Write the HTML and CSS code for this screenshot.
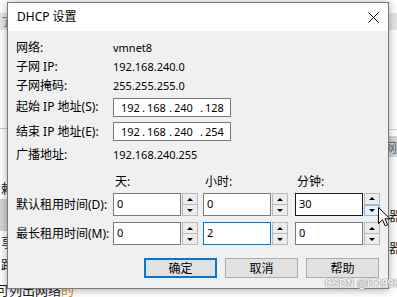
FILE: index.html
```html
<!DOCTYPE html>
<html lang="zh">
<head>
<meta charset="utf-8">
<title>DHCP 设置</title>
<link rel="stylesheet" href="styles.css">
</head>
<body>
<div class="desktop">
  <div class="backdrop">
    <div class="bd-col bd-left">
      <div class="bd-top"></div>
      <div class="bd-toolbar"><span class="bd-frag">了</span></div>
      <div class="bd-space1"></div>
      <div class="bd-line"></div>
      <div class="bd-space2"></div>
      <div class="bd-row">赖</div>
      <div class="bd-gray"></div>
      <div class="bd-row">享</div>
      <div class="bd-row bd-row-b">路</div>
      <div class="bd-space3"></div>
      <div class="bd-bottom">可列出网络<span class="bd-mark">的</span></div>
    </div>
    <div class="bd-col bd-right">
      <div class="bd-top"></div>
      <div class="bd-toolbar"></div>
      <div class="bd-rspace1"></div>
      <div class="bd-line"></div>
      <div class="bd-rspace2"></div>
      <div class="bd-rgray">网</div>
      <div class="bd-rspace3"></div>
      <div class="bd-rrow">器</div>
      <div class="bd-rrow bd-rrow-b">器</div>
    </div>
  </div>

  <div class="dialog">
    <div class="titlebar">
      <span class="title">DHCP 设置</span>
      <svg class="close" width="11" height="11" viewBox="0 0 11 11">
        <path d="M0.5 0.5 L10.5 10.5 M10.5 0.5 L0.5 10.5" stroke="#000" stroke-width="1" fill="none"/>
      </svg>
    </div>
    <div class="content">
      <div class="info">
        <div class="lbl">网络:</div><div class="val">vmnet8</div>
        <div class="lbl">子网 IP:</div><div class="val">192.168.240.0</div>
        <div class="lbl">子网掩码:</div><div class="val">255.255.255.0</div>
        <div class="lbl">起始 IP 地址(S):</div>
        <div class="ipbox"><span class="oct o1">192</span><span class="dot">.</span><span class="oct o2">168</span><span class="dot">.</span><span class="oct o3">240</span><span class="dot">.</span><span class="oct">128</span></div>
        <div class="lbl">结束 IP 地址(E):</div>
        <div class="ipbox"><span class="oct o1">192</span><span class="dot">.</span><span class="oct o2">168</span><span class="dot">.</span><span class="oct o3">240</span><span class="dot">.</span><span class="oct">254</span></div>
        <div class="lbl">广播地址:</div><div class="val">192.168.240.255</div>
      </div>

      <div class="lease">
        <div></div>
        <div class="hdr">天:</div>
        <div class="hdr">小时:</div>
        <div class="hdr">分钟:</div>

        <div class="lbl lrow">默认租用时间(D):</div>
        <div class="spin"><div class="sp-in">0</div><div class="sp-btns"><div class="sp-btn"><i class="up"></i></div><div class="sp-btn"><i class="down"></i></div></div></div>
        <div class="spin"><div class="sp-in">0</div><div class="sp-btns"><div class="sp-btn"><i class="up"></i></div><div class="sp-btn"><i class="down"></i></div></div></div>
        <div class="spin"><div class="sp-in hover">30</div><div class="sp-btns"><div class="sp-btn"><i class="up"></i></div><div class="sp-btn hot"><i class="down"></i></div></div></div>

        <div class="lbl lrow">最长租用时间(M):</div>
        <div class="spin"><div class="sp-in">0</div><div class="sp-btns"><div class="sp-btn"><i class="up"></i></div><div class="sp-btn"><i class="down"></i></div></div></div>
        <div class="spin"><div class="sp-in focus">2</div><div class="sp-btns"><div class="sp-btn"><i class="up"></i></div><div class="sp-btn"><i class="down"></i></div></div></div>
        <div class="spin"><div class="sp-in">0</div><div class="sp-btns"><div class="sp-btn"><i class="up"></i></div><div class="sp-btn"><i class="down"></i></div></div></div>
      </div>

      <div class="buttons">
        <button class="btn default">确定</button>
        <button class="btn">取消</button>
        <button class="btn">帮助</button>
      </div>
    </div>
  </div>

  <div class="watermark">CSDN @IT1995</div>

  <svg class="cursor" width="13" height="20" viewBox="0 0 13 20">
    <path d="M0.5 0.5 L0.5 16.5 L4.5 12.8 L7.2 18.8 L9.6 17.8 L7 11.8 L12 11.8 Z" fill="#fff" stroke="#000" stroke-width="1" stroke-linejoin="miter"/>
  </svg>
</div>
</body>
</html>
```
FILE: styles.css
```css
* { box-sizing: border-box; }
html, body { margin: 0; padding: 0; }
body {
  width: 397px;
  height: 297px;
  overflow: hidden;
  font-family: "Noto Sans", "Noto Sans CJK SC", sans-serif;
  font-size: 12px;
  color: #000;
  background: #fff;
}
.desktop {
  position: relative;
  width: 397px;
  height: 297px;
  overflow: hidden;
}

/* background application */
.backdrop { display: flex; width: 397px; height: 297px; }
.bd-col { display: flex; flex-direction: column; }
.bd-left { width: 50%; }
.bd-right { width: 50%; }
.bd-top { height: 13px; }
.bd-toolbar { height: 17px; background: #e6e6e6; font-family: "Noto Sans CJK SC", sans-serif; font-size: 11px; line-height: 17px; color: #4a6fa5; }
.bd-frag { margin-left: 1px; }
.bd-space1 { height: 102px; }
.bd-line { height: 1px; background: #cfcfcf; }
.bd-space2 { height: 50px; }
.bd-row { height: 22px; line-height: 22px; font-family: "Noto Sans CJK SC", sans-serif; font-size: 13px; color: #222; padding-left: 1px; }
.bd-gray { height: 34px; background: #d3d3d3; }
.bd-row-b { height: 26px; }
.bd-space3 { height: 5px; }
.bd-bottom { font-family: "Noto Sans CJK SC", sans-serif; font-size: 13px; line-height: 14px; color: #222; margin-left: -4px; white-space: nowrap; }
.bd-mark { color: #d58a20; }
.bd-rspace1 { height: 99px; }
.bd-rspace2 { height: 6px; }
.bd-rgray { height: 21px; background: #d6d6d6; font-family: "Noto Sans CJK SC", sans-serif; font-size: 13px; line-height: 21px; color: #666; text-align: right; }
.bd-rspace3 { height: 46px; }
.bd-rrow { height: 24px; line-height: 24px; font-family: "Noto Sans CJK SC", sans-serif; font-size: 13px; color: #222; text-align: right; margin-right: -5px; }
.bd-rrow-b { height: 34px; line-height: 40px; }

/* dialog window */
.dialog {
  position: absolute;
  left: 7px;
  top: 2px;
  width: 382px;
  height: 287px;
  background: #f0f0f0;
  border: 1px solid #7a7a7a;
  box-shadow: 0 1px 8px rgba(0, 0, 0, 0.35);
  display: flex;
  flex-direction: column;
}
.titlebar {
  height: 28px;
  background: #fff;
  display: flex;
  align-items: center;
  justify-content: space-between;
  padding: 0 9px 0 9px;
  flex: none;
}
.title { font-size: 12px; line-height: 14px; }
.close { display: block; }

.content { padding: 7px 0 0 8px; display: flex; flex-direction: column; }

.info {
  display: grid;
  grid-template-columns: 97px 1fr;
  grid-template-rows: 19px 19px 19px 24px 25px 21px;
  align-items: center;
}
.lbl { font-size: 12px; line-height: 16px; white-space: nowrap; }
.val { font-size: 11px; line-height: 16px; }

.ipbox {
  width: 118px;
  height: 19px;
  background: #fff;
  border: 1px solid #7a7a7a;
  display: flex;
  align-items: center;
  padding-left: 7px;
  font-size: 11px;
}
.oct { display: inline-block; }
.o1 { width: 21px; }
.o2 { width: 22px; }
.o3 { width: 26px; }
.dot { display: inline-block; width: 5px; }

.lease {
  margin-top: 6px;
  display: grid;
  grid-template-columns: 97px 90px 92px 85px;
  grid-template-rows: 22px 29px 23px;
  align-items: start;
}
.hdr { font-size: 12px; line-height: 22px; padding-left: 2px; }
.lrow { line-height: 23px; height: 23px; }

.spin { display: flex; width: 85px; height: 23px; }
.sp-in {
  width: 68px;
  height: 23px;
  background: #fff;
  border: 1px solid #7a7a7a;
  font-size: 11px;
  line-height: 19px;
  padding-left: 3px;
}
.sp-in.hover { border-color: #1a1a1a; }
.sp-in.focus { border-color: #0078d7; }
.sp-btns { width: 17px; display: flex; flex-direction: column; padding: 0 0 0 1px; }
.sp-btn {
  flex: 1;
  background: #ececec;
  border: 1px solid #b9b9b9;
  display: flex;
  align-items: center;
  justify-content: center;
}
.sp-btn + .sp-btn { border-top: none; }
.sp-btn.hot { background: #e5f1fb; border-color: #8fb8db; border-top: 1px solid #8fb8db; }
.up { display: block; width: 0; height: 0; border-left: 3px solid transparent; border-right: 3px solid transparent; border-bottom: 3px solid #000; }
.down { display: block; width: 0; height: 0; border-left: 3px solid transparent; border-right: 3px solid transparent; border-top: 3px solid #000; }

.buttons {
  margin-top: 13px;
  display: flex;
  justify-content: flex-end;
  gap: 8px;
  padding-right: 9px;
}
.btn {
  width: 73px;
  height: 20px;
  background: #e1e1e1;
  border: 1px solid #adadad;
  font-family: "Noto Sans CJK SC", sans-serif;
  font-size: 12px;
  line-height: 16px;
  padding: 0;
  color: #000;
}
.btn.default { border: 2px solid #0078d7; }

.watermark {
  position: absolute;
  left: 325px;
  top: 278px;
  white-space: nowrap;
  font-family: "Liberation Sans", sans-serif;
  font-weight: bold;
  font-size: 10px;
  color: #f4f4f4;
  text-shadow: 0 0 1px #8a8a8a, 0 0 1px #9a9a9a, 0 0 2px #bbb;
  letter-spacing: 0.2px;
}
.cursor { position: absolute; left: 378px; top: 207px; }
```
